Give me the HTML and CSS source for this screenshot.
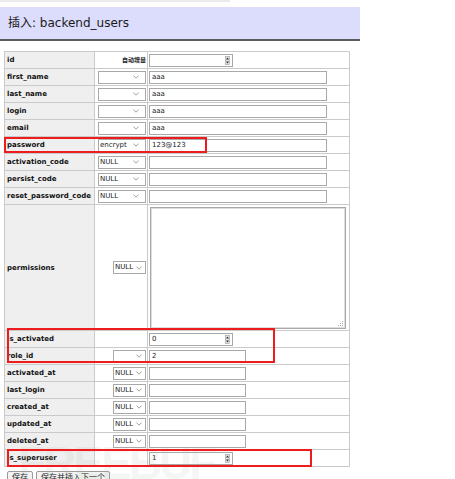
FILE: index.html
```html
<!DOCTYPE html>
<html>
<head>
<meta charset="utf-8">
<title>插入: backend_users</title>
<link rel="stylesheet" href="styles.css">
</head>
<body>
<div class="page">
  <div class="topline"></div>
  <h2 class="title">插入: backend_users</h2>

  <table class="edit">
    <colgroup><col class="c1"><col class="c2"><col class="c3"></colgroup>
    <tr>
      <th>id</th>
      <td><div class="fn"><span class="auto">自动增量</span></div></td>
      <td><div class="val"><span class="field num"><span class="txt"></span><svg class="spin" width="5" height="9" viewBox="0 0 5 9"><rect x="0.5" y="0.5" width="4" height="8" fill="#e4e4e4" stroke="#9a9a9a" stroke-width="0.6"/><path d="M1 3.6 L2.5 1.6 L4 3.6Z M1 5.4 L2.5 7.4 L4 5.4Z" fill="#333"/></svg></span></div></td>
    </tr>
    <tr>
      <th>first_name</th>
      <td><div class="fn"><span class="field sel"><span class="txt"></span><svg class="chev" width="6" height="4" viewBox="0 0 6 4"><polyline points="0.5,0.6 3,3.2 5.5,0.6" fill="none" stroke="#888" stroke-width="0.8"/></svg></span></div></td>
      <td><div class="val"><span class="field inp">aaa</span></div></td>
    </tr>
    <tr>
      <th>last_name</th>
      <td><div class="fn"><span class="field sel"><span class="txt"></span><svg class="chev" width="6" height="4" viewBox="0 0 6 4"><polyline points="0.5,0.6 3,3.2 5.5,0.6" fill="none" stroke="#888" stroke-width="0.8"/></svg></span></div></td>
      <td><div class="val"><span class="field inp">aaa</span></div></td>
    </tr>
    <tr>
      <th>login</th>
      <td><div class="fn"><span class="field sel"><span class="txt"></span><svg class="chev" width="6" height="4" viewBox="0 0 6 4"><polyline points="0.5,0.6 3,3.2 5.5,0.6" fill="none" stroke="#888" stroke-width="0.8"/></svg></span></div></td>
      <td><div class="val"><span class="field inp">aaa</span></div></td>
    </tr>
    <tr>
      <th>email</th>
      <td><div class="fn"><span class="field sel"><span class="txt"></span><svg class="chev" width="6" height="4" viewBox="0 0 6 4"><polyline points="0.5,0.6 3,3.2 5.5,0.6" fill="none" stroke="#888" stroke-width="0.8"/></svg></span></div></td>
      <td><div class="val"><span class="field inp">aaa</span></div></td>
    </tr>
    <tr>
      <th>password</th>
      <td><div class="fn"><span class="field sel"><span class="txt">encrypt</span><svg class="chev" width="6" height="4" viewBox="0 0 6 4"><polyline points="0.5,0.6 3,3.2 5.5,0.6" fill="none" stroke="#888" stroke-width="0.8"/></svg></span></div></td>
      <td><div class="val"><span class="field inp">123@123</span></div></td>
    </tr>
    <tr>
      <th>activation_code</th>
      <td><div class="fn"><span class="field sel"><span class="txt">NULL</span><svg class="chev" width="6" height="4" viewBox="0 0 6 4"><polyline points="0.5,0.6 3,3.2 5.5,0.6" fill="none" stroke="#888" stroke-width="0.8"/></svg></span></div></td>
      <td><div class="val"><span class="field inp"></span></div></td>
    </tr>
    <tr>
      <th>persist_code</th>
      <td><div class="fn"><span class="field sel"><span class="txt">NULL</span><svg class="chev" width="6" height="4" viewBox="0 0 6 4"><polyline points="0.5,0.6 3,3.2 5.5,0.6" fill="none" stroke="#888" stroke-width="0.8"/></svg></span></div></td>
      <td><div class="val"><span class="field inp"></span></div></td>
    </tr>
    <tr>
      <th>reset_password_code</th>
      <td><div class="fn"><span class="field sel"><span class="txt">NULL</span><svg class="chev" width="6" height="4" viewBox="0 0 6 4"><polyline points="0.5,0.6 3,3.2 5.5,0.6" fill="none" stroke="#888" stroke-width="0.8"/></svg></span></div></td>
      <td><div class="val"><span class="field inp"></span></div></td>
    </tr>
    <tr class="tall">
      <th>permissions</th>
      <td><div class="fn"><span class="field sel n"><span class="txt">NULL</span><svg class="chev" width="6" height="4" viewBox="0 0 6 4"><polyline points="0.5,0.6 3,3.2 5.5,0.6" fill="none" stroke="#888" stroke-width="0.8"/></svg></span></div></td>
      <td><div class="val"><span class="area"><svg class="grip" width="5" height="5" viewBox="0 0 5 5"><rect x="4" y="0" width="1" height="1" fill="#aaa"/><rect x="2" y="2" width="1" height="1" fill="#aaa"/><rect x="4" y="2" width="1" height="1" fill="#aaa"/><rect x="0" y="4" width="1" height="1" fill="#aaa"/><rect x="2" y="4" width="1" height="1" fill="#aaa"/><rect x="4" y="4" width="1" height="1" fill="#aaa"/></svg></span></div></td>
    </tr>
    <tr>
      <th>is_activated</th>
      <td><div class="fn"></div></td>
      <td><div class="val"><span class="field num">0<svg class="spin" width="5" height="9" viewBox="0 0 5 9"><rect x="0.5" y="0.5" width="4" height="8" fill="#e4e4e4" stroke="#9a9a9a" stroke-width="0.6"/><path d="M1 3.6 L2.5 1.6 L4 3.6Z M1 5.4 L2.5 7.4 L4 5.4Z" fill="#333"/></svg></span></div></td>
    </tr>
    <tr>
      <th>role_id</th>
      <td><div class="fn"><span class="field sel n"><span class="txt"></span><svg class="chev" width="6" height="4" viewBox="0 0 6 4"><polyline points="0.5,0.6 3,3.2 5.5,0.6" fill="none" stroke="#888" stroke-width="0.8"/></svg></span></div></td>
      <td><div class="val"><span class="field dt">2</span></div></td>
    </tr>
    <tr>
      <th>activated_at</th>
      <td><div class="fn"><span class="field sel n"><span class="txt">NULL</span><svg class="chev" width="6" height="4" viewBox="0 0 6 4"><polyline points="0.5,0.6 3,3.2 5.5,0.6" fill="none" stroke="#888" stroke-width="0.8"/></svg></span></div></td>
      <td><div class="val"><span class="field dt"></span></div></td>
    </tr>
    <tr>
      <th>last_login</th>
      <td><div class="fn"><span class="field sel n"><span class="txt">NULL</span><svg class="chev" width="6" height="4" viewBox="0 0 6 4"><polyline points="0.5,0.6 3,3.2 5.5,0.6" fill="none" stroke="#888" stroke-width="0.8"/></svg></span></div></td>
      <td><div class="val"><span class="field dt"></span></div></td>
    </tr>
    <tr>
      <th>created_at</th>
      <td><div class="fn"><span class="field sel n"><span class="txt">NULL</span><svg class="chev" width="6" height="4" viewBox="0 0 6 4"><polyline points="0.5,0.6 3,3.2 5.5,0.6" fill="none" stroke="#888" stroke-width="0.8"/></svg></span></div></td>
      <td><div class="val"><span class="field dt"></span></div></td>
    </tr>
    <tr>
      <th>updated_at</th>
      <td><div class="fn"><span class="field sel n"><span class="txt">NULL</span><svg class="chev" width="6" height="4" viewBox="0 0 6 4"><polyline points="0.5,0.6 3,3.2 5.5,0.6" fill="none" stroke="#888" stroke-width="0.8"/></svg></span></div></td>
      <td><div class="val"><span class="field dt"></span></div></td>
    </tr>
    <tr>
      <th>deleted_at</th>
      <td><div class="fn"><span class="field sel n"><span class="txt">NULL</span><svg class="chev" width="6" height="4" viewBox="0 0 6 4"><polyline points="0.5,0.6 3,3.2 5.5,0.6" fill="none" stroke="#888" stroke-width="0.8"/></svg></span></div></td>
      <td><div class="val"><span class="field dt"></span></div></td>
    </tr>
    <tr>
      <th>is_superuser</th>
      <td><div class="fn"></div></td>
      <td><div class="val"><span class="field num">1<svg class="spin" width="5" height="9" viewBox="0 0 5 9"><rect x="0.5" y="0.5" width="4" height="8" fill="#e4e4e4" stroke="#9a9a9a" stroke-width="0.6"/><path d="M1 3.6 L2.5 1.6 L4 3.6Z M1 5.4 L2.5 7.4 L4 5.4Z" fill="#333"/></svg></span></div></td>
    </tr>
  </table>

  <div class="actions">
    <span class="btn">保存</span>
    <span class="btn">保存并插入下一个</span>
  </div>

  <div class="wm">FREEBUF</div>
  <div class="mark m1"></div>
  <div class="mark m2"></div>
  <div class="mark m3"></div>
</div>
</body>
</html>
```

FILE: styles.css
```css
* { box-sizing: border-box; }

body {
  margin: 0;
  background: #fff;
  font-family: "DejaVu Sans", "Noto Sans CJK SC", sans-serif;
  color: #111;
}

.page {
  position: relative;
  width: 455px;
  height: 479px;
  overflow: hidden;
}

.topline {
  width: 230px;
  height: 2px;
  background: #ebebeb;
}

.title {
  margin: 5px 0 0;
  width: 360px;
  height: 34px;
  background: #dcdcfc;
  border-bottom: 2px solid #5c5c5c;
  padding-left: 8px;
  font-size: 12px;
  font-weight: normal;
  line-height: 33px;
  color: #1a1a1a;
  font-family: "DejaVu Sans", "Noto Sans CJK SC", sans-serif;
}

.edit {
  border-collapse: collapse;
  table-layout: fixed;
  width: 345px;
  margin: 10px 0 0 4px;
}

.c1 { width: 90px; }
.c2 { width: 53px; }
.c3 { width: 202px; }

.edit tr { height: 17px; }
.edit tr.tall { height: 126px; }

.edit th,
.edit td {
  border: 1px solid #cacaca;
  padding: 0;
}

.edit th {
  background: #efefef;
  text-align: left;
  font-size: 7px;
  font-weight: bold;
  padding-left: 2px;
  color: #111;
  white-space: nowrap;
}

.fn {
  display: flex;
  justify-content: flex-end;
  align-items: center;
  padding-right: 1px;
}

.val {
  display: flex;
  align-items: center;
  padding-left: 1px;
}

.auto {
  font-size: 6px;
  font-weight: bold;
  color: #222;
  line-height: 10px;
}

.field {
  display: flex;
  align-items: center;
  height: 13px;
  border: 1px solid #a8a8a8;
  background: #fff;
  font-size: 7px;
  line-height: 11px;
  color: #222;
  padding: 0 2px;
}

.sel {
  width: 48px;
  justify-content: space-between;
  padding: 0 6px 0 1px;
}

.sel.n { width: 33px; padding-right: 3px; }

.inp { width: 178px; }
.num { width: 84px; justify-content: space-between; padding-right: 2px; }
.dt { width: 97px; }

.area {
  position: relative;
  display: block;
  width: 196px;
  height: 122px;
  margin-left: 1px;
  border: 1px solid #a8a8a8;
  box-shadow: inset 0 0 0 1px #dedede;
  background: #fff;
}

.grip {
  position: absolute;
  right: 2px;
  bottom: 2px;
}

.actions {
  display: flex;
  gap: 3px;
  margin: 4px 0 0 7px;
}

.btn {
  display: block;
  height: 14px;
  border: 1px solid #9a9a9a;
  border-radius: 2px;
  background: #f3f3f3;
  font-size: 8px;
  line-height: 12px;
  padding: 0 4px;
  color: #222;
}

.wm {
  position: absolute;
  left: 18px;
  top: 436px;
  font-family: "Liberation Sans", sans-serif;
  font-size: 46px;
  font-weight: bold;
  letter-spacing: -3px;
  color: rgba(170, 185, 170, 0.13);
  pointer-events: none;
}

.mark {
  position: absolute;
  border: 2px solid #ee1c1c;
}

.m1 { left: 4px; top: 137px; width: 203px; height: 16px; }
.m2 { left: 7px; top: 328px; width: 268px; height: 35px; }
.m3 { left: 7px; top: 449px; width: 305px; height: 18px; }
```
